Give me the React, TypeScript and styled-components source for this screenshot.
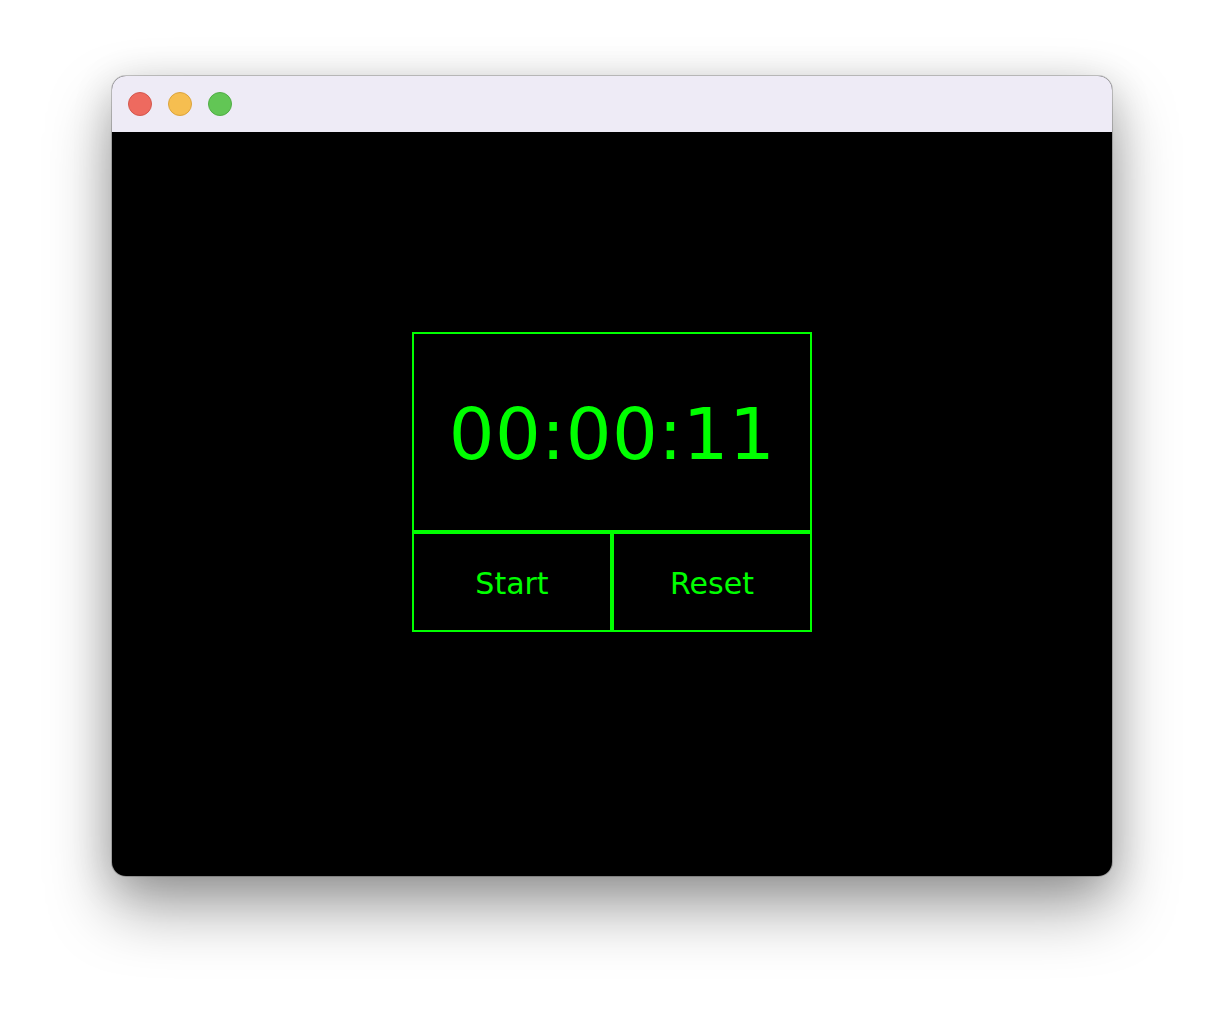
import React from "react";
import styled, { createGlobalStyle } from "styled-components";

const Global = createGlobalStyle`
  html, body { margin: 0; padding: 0; background: #ffffff; }
  body { font-family: "DejaVu Sans", Verdana, sans-serif; }
`;

const Page = styled.div`
  width: 1224px;
  height: 1024px;
  display: flex;
  justify-content: center;
  align-items: flex-start;
  padding-top: 76px;
  box-sizing: border-box;
  background: #ffffff;
`;

const Window = styled.div`
  width: 1000px;
  height: 800px;
  border-radius: 14px;
  overflow: hidden;
  display: flex;
  flex-direction: column;
  background: #000;
  box-shadow: 0 0 0 1px rgba(0, 0, 0, 0.2), 0 32px 64px rgba(0, 0, 0, 0.36),
    0 8px 40px rgba(0, 0, 0, 0.16);
`;

const TitleBar = styled.div`
  height: 56px;
  flex: none;
  background: #eeebf6;
  display: flex;
  align-items: center;
  gap: 16px;
  padding-left: 16px;
`;

const Light = styled.span<{ $fill: string; $edge: string }>`
  width: 24px;
  height: 24px;
  border-radius: 50%;
  box-sizing: border-box;
  background: ${(p) => p.$fill};
  border: 1px solid ${(p) => p.$edge};
`;

const Content = styled.div`
  flex: 1;
  display: flex;
  justify-content: center;
  align-items: flex-start;
  padding-top: 200px;
`;

const Stopwatch = styled.div`
  width: 400px;
  display: flex;
  flex-direction: column;
  color: #00ff00;
`;

const Display = styled.div`
  height: 200px;
  box-sizing: border-box;
  border: 2px solid #00ff00;
  display: flex;
  align-items: center;
  justify-content: center;
  font-size: 72px;
  line-height: 1;
  letter-spacing: 0.4px;
  padding-top: 4px;
`;

const Controls = styled.div`
  display: grid;
  grid-template-columns: 1fr 1fr;
`;

const Button = styled.button`
  height: 100px;
  box-sizing: border-box;
  background: #000;
  color: #00ff00;
  border: 2px solid #00ff00;
  font-family: "DejaVu Sans", Verdana, sans-serif;
  font-size: 30px;
  padding: 2px 0 0;
  cursor: pointer;
`;

export default function App() {
  return (
    <>
      <Global />
      <Page>
        <Window>
          <TitleBar>
            <Light $fill="#ee6a5f" $edge="#d4574d" />
            <Light $fill="#f6be50" $edge="#dca43c" />
            <Light $fill="#62c655" $edge="#50ad45" />
          </TitleBar>
          <Content>
            <Stopwatch>
              <Display>00:00:11</Display>
              <Controls>
                <Button>Start</Button>
                <Button>Reset</Button>
              </Controls>
            </Stopwatch>
          </Content>
        </Window>
      </Page>
    </>
  );
}
